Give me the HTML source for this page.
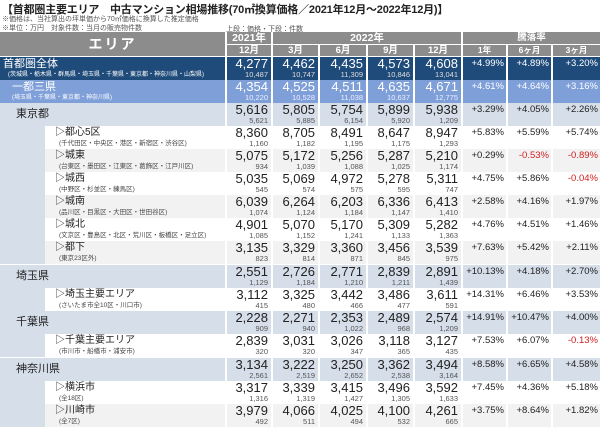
<!DOCTYPE html><html><head><meta charset="utf-8"><style>
*{margin:0;padding:0;box-sizing:border-box}
body{width:600px;height:428px;background:#fff;font-family:"Liberation Sans","Noto Sans CJK JP",sans-serif;position:relative;overflow:hidden;color:#222}
.t{position:absolute;left:2px;top:1px;font-size:11px;font-weight:bold;white-space:nowrap;letter-spacing:-0.2px}
.n{position:absolute;left:2px;font-size:7px;color:#555;white-space:nowrap}
.h{position:absolute;background:#8c8c8c;color:#fff;font-weight:bold;text-align:center;border-right:2px solid #fff;border-bottom:1px solid #fff}
.r{position:absolute;left:0;width:600px;height:23px;display:flex}
.c{height:23px;border-right:2px solid #fff;text-align:right;padding-right:3px;font-size:13px;line-height:14px;white-space:nowrap}
.c b{font-weight:normal;display:block}
.c i{font-style:normal;display:block;font-size:7.5px;line-height:8px;color:#555}
.p{font-size:9.5px;line-height:13px;padding-right:2px}
.w1{width:46px}.w2{width:47px}.w3{width:48px}.w4{width:47px}.w5{width:48px}.w6{width:45px}.w7{width:45px}.w8{width:47px;border-right:0}
.red{color:#d02020}
.nm{width:227px;border-right:2px solid #fff;padding-left:4px;white-space:nowrap;overflow:hidden}
.ind{width:45px;background:#d5dee9;border-right:0}
.sub{width:182px;border-right:2px solid #fff;padding-left:10px;padding-top:1px;white-space:nowrap;font-size:10px;line-height:12px}
.sub i{font-style:normal;display:block;font-size:6.5px;line-height:9px;color:#444;padding-left:4px}
.dk{background:#1f4b7a;color:#fff}.dk .c i{color:#ddd}
.lt{background:#7e9fd8;color:#fff}.lt .c i{color:#eef}
.pf{background:#d5dee9}
.gy{background:#f2f2f2}
.pn{font-size:11px;line-height:22px;padding-left:16px}
</style></head><body>
<div class="t">【首都圏主要エリア　中古マンション相場推移(70㎡換算価格／2021年12月～2022年12月)】</div>
<div class="n" style="top:14px">※価格は、当社算出の坪単価から70㎡価格に換算した推定価格</div>
<div class="n" style="top:23px">※単位：万円　対象件数：当月の販売物件数</div>
<div class="n" style="top:24px;left:226px">上段：価格・下段：件数</div>

<div class="h" style="left:0;top:32px;width:227px;height:25px;font-size:14px;line-height:24px;letter-spacing:2px">エリア</div>
<div class="h" style="left:227px;top:32px;width:46px;height:13px;font-size:10.5px;line-height:12px">2021年</div>
<div class="h" style="left:273px;top:32px;width:190px;height:13px;font-size:10.5px;line-height:12px">2022年</div>
<div class="h" style="left:463px;top:32px;width:137px;height:13px;font-size:9.5px;line-height:12px;border-right:0">騰落率</div>
<div class="h" style="left:227px;top:45px;width:46px;height:12px;font-size:9.5px;line-height:11px">12月</div>
<div class="h" style="left:273px;top:45px;width:47px;height:12px;font-size:9.5px;line-height:11px">3月</div>
<div class="h" style="left:320px;top:45px;width:48px;height:12px;font-size:9.5px;line-height:11px">6月</div>
<div class="h" style="left:368px;top:45px;width:47px;height:12px;font-size:9.5px;line-height:11px">9月</div>
<div class="h" style="left:415px;top:45px;width:48px;height:12px;font-size:9.5px;line-height:11px">12月</div>
<div class="h" style="left:463px;top:45px;width:45px;height:12px;font-size:8.5px;line-height:11px">1年</div>
<div class="h" style="left:508px;top:45px;width:45px;height:12px;font-size:8.5px;line-height:11px">6ヶ月</div>
<div class="h" style="left:553px;top:45px;width:47px;height:12px;font-size:8.5px;line-height:11px;border-right:0">3ヶ月</div>

<div class="r dk" style="top:57px"><div class="nm" style="font-size:11px;line-height:13px;padding-left:3px;padding-top:1px">首都圏全体<div style="font-size:6px;line-height:8px;padding-left:5px">(茨城県・栃木県・群馬県・埼玉県・千葉県・東京都・神奈川県・山梨県)</div></div><div class="c w1"><b>4,277</b><i>10,487</i></div><div class="c w2"><b>4,462</b><i>10,747</i></div><div class="c w3"><b>4,435</b><i>11,309</i></div><div class="c w4"><b>4,573</b><i>10,846</i></div><div class="c w5"><b>4,608</b><i>13,041</i></div><div class="c p w6">+4.99%</div><div class="c p w7">+4.89%</div><div class="c p w8">+3.20%</div></div>

<div class="r lt" style="top:80px"><div class="nm" style="font-size:11px;line-height:13px;padding-left:12px;padding-top:1px">一都三県<div style="font-size:6px;line-height:8px;padding-left:0">(埼玉県・千葉県・東京都・神奈川県)</div></div><div class="c w1"><b>4,354</b><i>10,220</i></div><div class="c w2"><b>4,525</b><i>10,528</i></div><div class="c w3"><b>4,511</b><i>11,038</i></div><div class="c w4"><b>4,635</b><i>10,637</i></div><div class="c w5"><b>4,671</b><i>12,775</i></div><div class="c p w6">+4.61%</div><div class="c p w7">+4.64%</div><div class="c p w8">+3.16%</div></div>

<div class="r pf" style="top:103px"><div class="nm pn">東京都</div><div class="c w1"><b>5,616</b><i>5,621</i></div><div class="c w2"><b>5,805</b><i>5,885</i></div><div class="c w3"><b>5,754</b><i>6,154</i></div><div class="c w4"><b>5,899</b><i>5,920</i></div><div class="c w5"><b>5,938</b><i>1,209</i></div><div class="c p w6">+3.29%</div><div class="c p w7">+4.05%</div><div class="c p w8">+2.26%</div></div>

<div class="r" style="top:126px"><div class="c ind"></div><div class="sub">▷都心5区<i>(千代田区・中央区・港区・新宿区・渋谷区)</i></div><div class="c w1"><b>8,360</b><i>1,160</i></div><div class="c w2"><b>8,705</b><i>1,182</i></div><div class="c w3"><b>8,491</b><i>1,195</i></div><div class="c w4"><b>8,647</b><i>1,175</i></div><div class="c w5"><b>8,947</b><i>1,293</i></div><div class="c p w6">+5.83%</div><div class="c p w7">+5.59%</div><div class="c p w8">+5.74%</div></div>
<div class="r gy" style="top:149px"><div class="c ind"></div><div class="sub">▷城東<i>(台東区・墨田区・江東区・葛飾区・江戸川区)</i></div><div class="c w1"><b>5,075</b><i>934</i></div><div class="c w2"><b>5,172</b><i>1,039</i></div><div class="c w3"><b>5,256</b><i>1,088</i></div><div class="c w4"><b>5,287</b><i>1,025</i></div><div class="c w5"><b>5,210</b><i>1,174</i></div><div class="c p w6">+0.29%</div><div class="c p w7 red">-0.53%</div><div class="c p w8 red">-0.89%</div></div>
<div class="r" style="top:172px"><div class="c ind"></div><div class="sub">▷城西<i>(中野区・杉並区・練馬区)</i></div><div class="c w1"><b>5,035</b><i>545</i></div><div class="c w2"><b>5,069</b><i>574</i></div><div class="c w3"><b>4,972</b><i>575</i></div><div class="c w4"><b>5,278</b><i>595</i></div><div class="c w5"><b>5,311</b><i>747</i></div><div class="c p w6">+4.75%</div><div class="c p w7">+5.86%</div><div class="c p w8 red">-0.04%</div></div>
<div class="r gy" style="top:195px"><div class="c ind"></div><div class="sub">▷城南<i>(品川区・目黒区・大田区・世田谷区)</i></div><div class="c w1"><b>6,039</b><i>1,074</i></div><div class="c w2"><b>6,264</b><i>1,124</i></div><div class="c w3"><b>6,203</b><i>1,184</i></div><div class="c w4"><b>6,336</b><i>1,147</i></div><div class="c w5"><b>6,413</b><i>1,410</i></div><div class="c p w6">+2.58%</div><div class="c p w7">+4.16%</div><div class="c p w8">+1.97%</div></div>
<div class="r" style="top:218px"><div class="c ind"></div><div class="sub">▷城北<i>(文京区・豊島区・北区・荒川区・板橋区・足立区)</i></div><div class="c w1"><b>4,901</b><i>1,085</i></div><div class="c w2"><b>5,070</b><i>1,152</i></div><div class="c w3"><b>5,170</b><i>1,241</i></div><div class="c w4"><b>5,309</b><i>1,133</i></div><div class="c w5"><b>5,282</b><i>1,363</i></div><div class="c p w6">+4.76%</div><div class="c p w7">+4.51%</div><div class="c p w8">+1.46%</div></div>
<div class="r gy" style="top:241px"><div class="c ind"></div><div class="sub">▷都下<i>(東京23区外)</i></div><div class="c w1"><b>3,135</b><i>823</i></div><div class="c w2"><b>3,329</b><i>814</i></div><div class="c w3"><b>3,360</b><i>871</i></div><div class="c w4"><b>3,456</b><i>845</i></div><div class="c w5"><b>3,539</b><i>975</i></div><div class="c p w6">+7.63%</div><div class="c p w7">+5.42%</div><div class="c p w8">+2.11%</div></div>

<div class="r pf" style="top:265px"><div class="nm pn">埼玉県</div><div class="c w1"><b>2,551</b><i>1,129</i></div><div class="c w2"><b>2,726</b><i>1,184</i></div><div class="c w3"><b>2,771</b><i>1,210</i></div><div class="c w4"><b>2,839</b><i>1,211</i></div><div class="c w5"><b>2,891</b><i>1,439</i></div><div class="c p w6">+10.13%</div><div class="c p w7">+4.18%</div><div class="c p w8">+2.70%</div></div>
<div class="r" style="top:288px"><div class="c ind"></div><div class="sub">▷埼玉主要エリア<i>(さいたま市全10区・川口市)</i></div><div class="c w1"><b>3,112</b><i>415</i></div><div class="c w2"><b>3,325</b><i>480</i></div><div class="c w3"><b>3,442</b><i>466</i></div><div class="c w4"><b>3,486</b><i>477</i></div><div class="c w5"><b>3,611</b><i>591</i></div><div class="c p w6">+14.31%</div><div class="c p w7">+6.46%</div><div class="c p w8">+3.53%</div></div>
<div class="r pf" style="top:311px"><div class="nm pn">千葉県</div><div class="c w1"><b>2,228</b><i>909</i></div><div class="c w2"><b>2,271</b><i>940</i></div><div class="c w3"><b>2,353</b><i>1,022</i></div><div class="c w4"><b>2,489</b><i>968</i></div><div class="c w5"><b>2,574</b><i>1,209</i></div><div class="c p w6">+14.91%</div><div class="c p w7">+10.47%</div><div class="c p w8">+4.00%</div></div>
<div class="r" style="top:334px"><div class="c ind"></div><div class="sub">▷千葉主要エリア<i>(市川市・船橋市・浦安市)</i></div><div class="c w1"><b>2,839</b><i>320</i></div><div class="c w2"><b>3,031</b><i>320</i></div><div class="c w3"><b>3,026</b><i>347</i></div><div class="c w4"><b>3,118</b><i>365</i></div><div class="c w5"><b>3,127</b><i>435</i></div><div class="c p w6">+7.53%</div><div class="c p w7">+6.07%</div><div class="c p w8 red">-0.13%</div></div>
<div class="r pf" style="top:358px"><div class="nm pn">神奈川県</div><div class="c w1"><b>3,134</b><i>2,561</i></div><div class="c w2"><b>3,222</b><i>2,519</i></div><div class="c w3"><b>3,250</b><i>2,652</i></div><div class="c w4"><b>3,362</b><i>2,538</i></div><div class="c w5"><b>3,494</b><i>3,164</i></div><div class="c p w6">+8.58%</div><div class="c p w7">+6.65%</div><div class="c p w8">+4.58%</div></div>
<div class="r" style="top:381px"><div class="c ind"></div><div class="sub">▷横浜市<i>(全18区)</i></div><div class="c w1"><b>3,317</b><i>1,316</i></div><div class="c w2"><b>3,339</b><i>1,319</i></div><div class="c w3"><b>3,415</b><i>1,427</i></div><div class="c w4"><b>3,496</b><i>1,305</i></div><div class="c w5"><b>3,592</b><i>1,633</i></div><div class="c p w6">+7.45%</div><div class="c p w7">+4.36%</div><div class="c p w8">+5.18%</div></div>
<div class="r gy" style="top:404px"><div class="c ind"></div><div class="sub">▷川崎市<i>(全7区)</i></div><div class="c w1"><b>3,979</b><i>492</i></div><div class="c w2"><b>4,066</b><i>511</i></div><div class="c w3"><b>4,025</b><i>494</i></div><div class="c w4"><b>4,100</b><i>532</i></div><div class="c w5"><b>4,261</b><i>665</i></div><div class="c p w6">+3.75%</div><div class="c p w7">+8.64%</div><div class="c p w8">+1.82%</div></div>
</body></html>
